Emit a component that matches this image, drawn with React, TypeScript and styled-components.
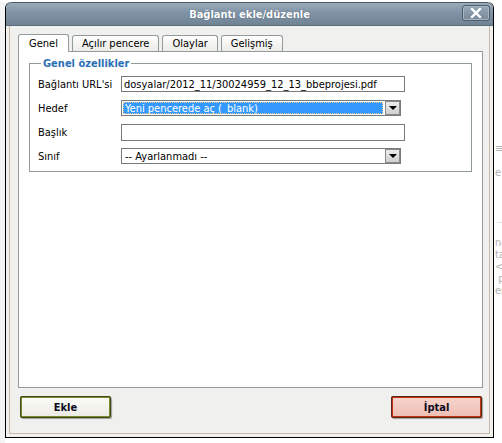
import React from "react";
import styled, { createGlobalStyle } from "styled-components";

const GlobalStyle = createGlobalStyle`
  html, body {
    margin: 0;
    padding: 0;
    background: #ffffff;
  }
  body {
    font-family: "DejaVu Sans Condensed", "DejaVu Sans", Verdana, sans-serif;
    font-size: 11px;
    color: #000;
  }
`;

const Page = styled.div`
  display: flex;
  align-items: flex-start;
  width: 502px;
  height: 443px;
  overflow: hidden;
`;

const LeftStrip = styled.div`
  width: 5px;
  height: 443px;
  background: #f4f4f4;
  border-top: 2px solid #fff;
  box-sizing: border-box;
`;

const RightStrip = styled.div`
  flex: 1;
  height: 443px;
  overflow: hidden;
  padding: 0 0 0 3px;
  box-sizing: border-box;
  display: flex;
  flex-direction: column;
  color: #b0b0b0;
  font-size: 11px;
  line-height: 12px;
  white-space: nowrap;
`;

const PageRule = styled.div<{ $top: number }>`
  margin-top: ${({ $top }) => $top}px;
  border-top: 1px solid #e4e4e4;
`;

const PageText = styled.div<{ $top?: number }>`
  margin-top: ${({ $top = 0 }) => $top}px;
  margin-left: -2px;
`;

const Dialog = styled.div`
  margin-top: 2px;
  width: 489px;
  height: 436px;
  display: flex;
  flex-direction: column;
  border: 1px solid #000;
  border-top: none;
  border-radius: 6px 6px 0 0;
  box-sizing: border-box;
  overflow: hidden;
`;

const TitleBar = styled.div`
  position: relative;
  height: 22px;
  flex: none;
  display: flex;
  align-items: center;
  justify-content: center;
  background: linear-gradient(#9aabba 0%, #7f93a5 45%, #6f8395 100%);
  border-bottom: 1px solid #5c6e7e;
  border-top: 1px solid #4b5a68;
  border-radius: 6px 6px 0 0;
  color: #fff;
  font-weight: bold;
  font-size: 11px;
  text-shadow: 0 0 1px #445566;
`;

const CloseButton = styled.div`
  position: absolute;
  right: 3px;
  top: 2px;
  width: 28px;
  height: 16px;
  box-sizing: border-box;
  border: 1px solid #4d5c6a;
  border-radius: 3px;
  background: linear-gradient(#98a8b6, #768899);
  box-shadow: inset 0 0 0 1px #a9b7c3;
  display: flex;
  align-items: center;
  justify-content: center;
`;

const Body = styled.div`
  flex: 1;
  background: #f0f0ee;
  padding: 0 3px 3px 3px;
  display: flex;
`;

const Inner = styled.div`
  flex: 1;
  border: 1px solid #c8b9a9;
  border-top: none;
  padding: 8px 6px 15px 8px;
  display: flex;
  flex-direction: column;
`;

const Tabs = styled.div`
  display: flex;
  align-items: flex-end;
  gap: 3px;
  height: 17px;
  position: relative;
  z-index: 1;
`;

const Tab = styled.div<{ $active?: boolean }>`
  height: ${({ $active }) => ($active ? 18 : 16)}px;
  margin-bottom: ${({ $active }) => ($active ? -1 : 0)}px;
  box-sizing: border-box;
  padding: 0 ${({ $active }) => ($active ? 10 : 9)}px;
  border: 1px solid #919b9c;
  border-bottom: none;
  border-radius: 3px 3px 0 0;
  background: ${({ $active }) =>
    $active ? "#ffffff" : "linear-gradient(#ffffff, #ecebe6)"};
  display: flex;
  align-items: center;
  padding-bottom: ${({ $active }) => ($active ? 1 : 0)}px;
  font-size: 11px;
  color: #000;
`;

const Panel = styled.div`
  height: 337px;
  box-sizing: border-box;
  border: 1px solid #919b9c;
  background: #fff;
  padding: 5px 10px 0 10px;
`;

const Fieldset = styled.fieldset`
  margin: 0;
  padding: 2px 8px 3px 8px;
  border: 1px solid #919b9c;
`;

const Legend = styled.legend`
  margin-left: 3px;
  padding: 0 2px;
  color: #2b6fb6;
  font-weight: bold;
  font-size: 11px;
`;

const FormGrid = styled.div`
  display: grid;
  grid-template-columns: 83px 1fr;
  grid-auto-rows: 24px;
  align-items: center;
`;

const Label = styled.div`
  font-size: 11px;
  white-space: nowrap;
`;

const TextInput = styled.div<{ $h?: number }>`
  width: 284px;
  height: ${({ $h = 16 }) => $h}px;
  box-sizing: border-box;
  border: 1px solid #7a7a7a;
  background: #fff;
  padding: 0 2px;
  display: flex;
  align-items: center;
  font-size: 11px;
  white-space: nowrap;
  overflow: hidden;
`;

const Select = styled.div`
  width: 280px;
  height: 16px;
  box-sizing: border-box;
  border: 1px solid #7a7a7a;
  background: #fff;
  display: flex;
  padding: 1px;
`;

const SelectValue = styled.div<{ $highlight?: boolean }>`
  flex: 1;
  display: flex;
  align-items: center;
  padding: 0 2px;
  font-size: 11px;
  white-space: nowrap;
  overflow: hidden;
  background: ${({ $highlight }) => ($highlight ? "#3399ff" : "transparent")};
  color: ${({ $highlight }) => ($highlight ? "#fff" : "#000")};
  outline: ${({ $highlight }) => ($highlight ? "1px dotted #f5c78a" : "none")};
  outline-offset: -1px;
`;

const SelectArrow = styled.div`
  width: 15px;
  box-sizing: border-box;
  border: 1px solid #8a8a8a;
  background: linear-gradient(#ececec, #cfcfcf);
  display: flex;
  align-items: center;
  justify-content: center;
  margin: -1px -1px -1px 2px;
`;

const Triangle = styled.div`
  width: 0;
  height: 0;
  border-left: 4px solid transparent;
  border-right: 4px solid transparent;
  border-top: 4px solid #000;
`;

const Footer = styled.div`
  margin-top: auto;
  display: flex;
  justify-content: space-between;
  padding: 0 1px 0 2px;
`;

const Button = styled.div<{ $tone: "ok" | "cancel" }>`
  width: 91px;
  height: 22px;
  box-sizing: border-box;
  border: 2px solid ${({ $tone }) => ($tone === "ok" ? "#7a8b2c" : "#c2310e")};
  outline: 1px solid ${({ $tone }) => ($tone === "ok" ? "#3f4a1c" : "#5a2a1e")};
  outline-offset: -1px;
  border-radius: 2px;
  background: ${({ $tone }) =>
    $tone === "ok"
      ? "linear-gradient(#fbfbf8, #ecebe4)"
      : "linear-gradient(#f6d3cb, #efc0b5)"};
  box-shadow: 1px 1px 1px rgba(0, 0, 0, 0.35);
  display: flex;
  align-items: center;
  justify-content: center;
  font-weight: bold;
  font-size: 11px;
  color: #0c0c20;
`;

const App: React.FC = () => {
  return (
    <>
      <GlobalStyle />
      <Page>
        <LeftStrip />
        <Dialog>
          <TitleBar>
            Bağlantı ekle/düzenle
            <CloseButton>
              <svg width="12" height="10" viewBox="0 0 12 10">
                <path
                  d="M2 1 L10 9 M10 1 L2 9"
                  stroke="#fff"
                  strokeWidth="2.4"
                  strokeLinecap="square"
                />
              </svg>
            </CloseButton>
          </TitleBar>
          <Body>
            <Inner>
              <Tabs>
                <Tab $active>Genel</Tab>
                <Tab>Açılır pencere</Tab>
                <Tab>Olaylar</Tab>
                <Tab>Gelişmiş</Tab>
              </Tabs>
              <Panel>
                <Fieldset>
                  <Legend>Genel özellikler</Legend>
                  <FormGrid>
                    <Label>Bağlantı URL'si</Label>
                    <TextInput>dosyalar/2012_11/30024959_12_13_bbeprojesi.pdf</TextInput>
                    <Label>Hedef</Label>
                    <Select>
                      <SelectValue $highlight>Yeni pencerede aç (_blank)</SelectValue>
                      <SelectArrow>
                        <Triangle />
                      </SelectArrow>
                    </Select>
                    <Label>Başlık</Label>
                    <TextInput $h={17} />
                    <Label>Sınıf</Label>
                    <Select>
                      <SelectValue>-- Ayarlanmadı --</SelectValue>
                      <SelectArrow>
                        <Triangle />
                      </SelectArrow>
                    </Select>
                  </FormGrid>
                </Fieldset>
              </Panel>
              <Footer>
                <Button $tone="ok">Ekle</Button>
                <Button $tone="cancel">İptal</Button>
              </Footer>
            </Inner>
          </Body>
        </Dialog>
        <RightStrip>
          <PageText $top={143}>≡</PageText>
          <PageText $top={12}>e</PageText>
          <PageRule $top={43} />
          <PageText $top={14}>na</PageText>
          <PageText>ta</PageText>
          <PageText>&lt;</PageText>
          <PageText>&nbsp;p</PageText>
          <PageText>er</PageText>
        </RightStrip>
      </Page>
    </>
  );
};

export default App;
